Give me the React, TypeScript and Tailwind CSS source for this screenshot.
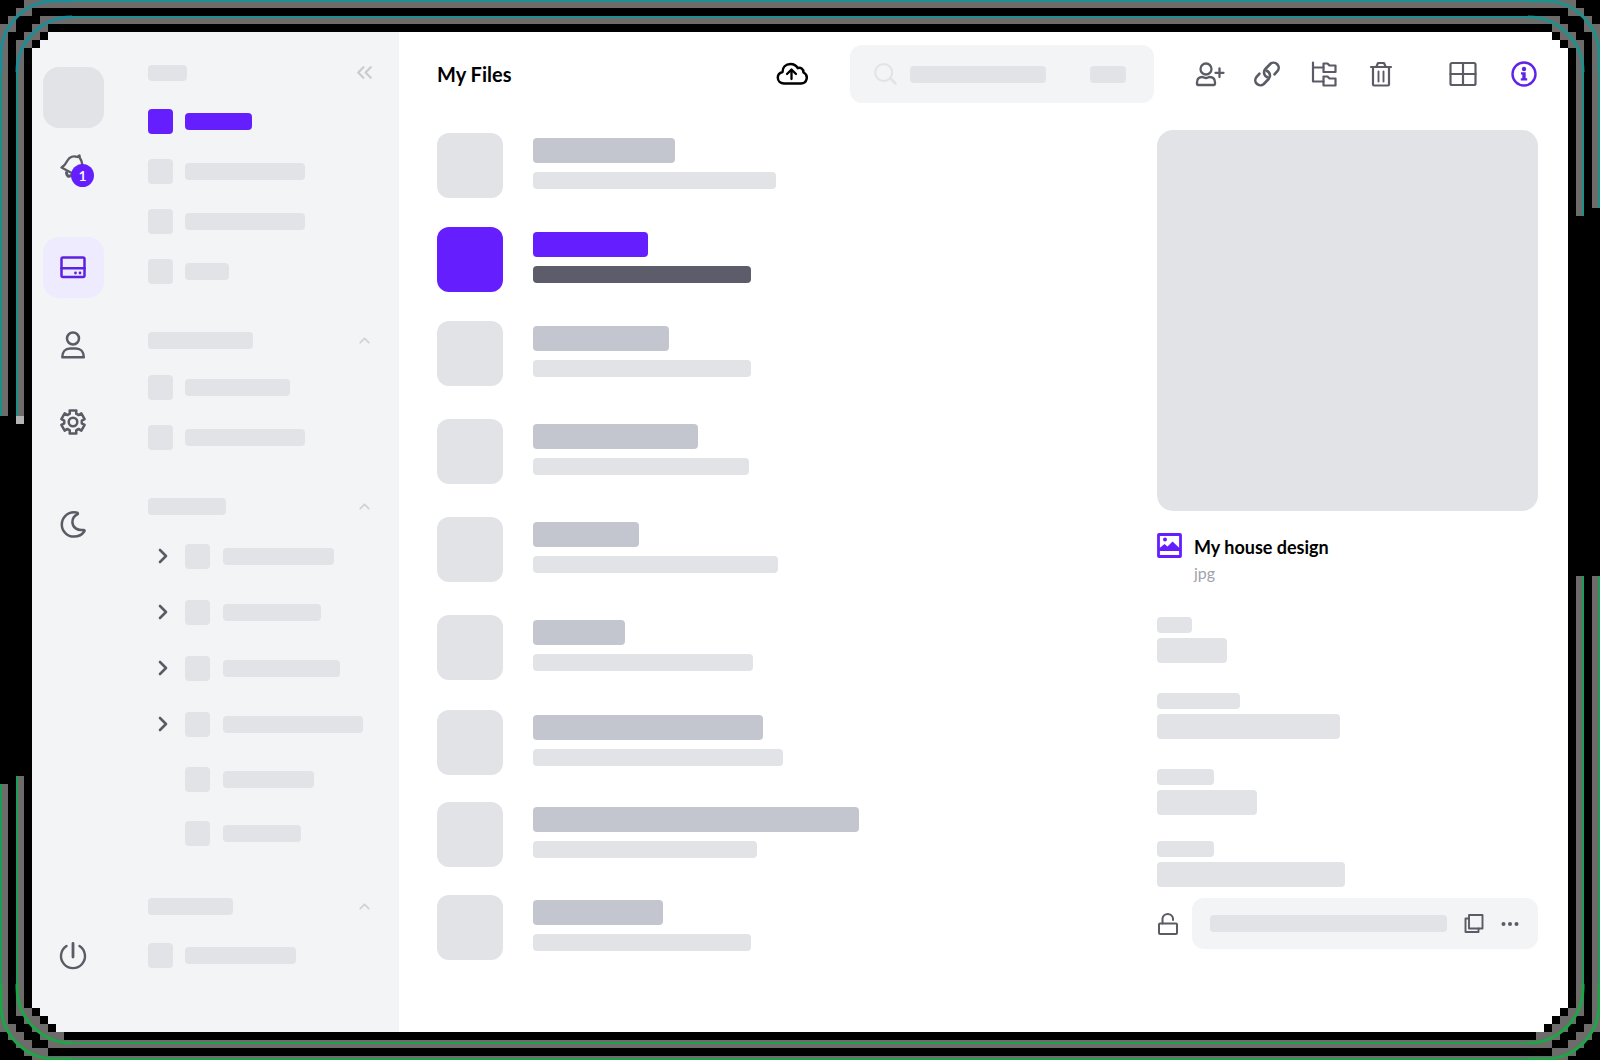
import React from "react";
import { ChevronRight, ChevronUp, ChevronsLeft } from "lucide-react";

/* ---------- decorative frame ---------- */

const TOP_CORNER = [
  "000111111",
  "001100000",
  "010001111",
  "110011000",
  "100110   ",
  "10110    ",
  "1010     ",
  "1010     ",
  "1010     ",
];

const BOTTOM_CORNER = [
  "1010     ",
  "1010     ",
  "1010     ",
  "10110    ",
  "100110   ",
  "1100110  ",
  "011001110",
  "001100111",
  "000111000",
  "000011111",
];

function Corner({ side, right }: { side: "top" | "bottom"; right?: boolean }) {
  const top = side === "top";
  const rows = top ? TOP_CORNER : BOTTOM_CORNER;
  const place = top
    ? right
      ? "top-0 right-0 -scale-x-100"
      : "top-0 left-0"
    : right
      ? "bottom-0 right-0 -scale-x-100"
      : "bottom-0 left-0";
  const h = top ? 72 : 76;
  const line = top ? (right ? "#1f908a" : "#1c8d98") : "#1da548";
  return (
    <svg
      aria-hidden="true"
      width="72"
      height={h}
      viewBox={`0 0 72 ${h}`}
      className={`pointer-events-none absolute ${place}`}
      shapeRendering="crispEdges"
    >
      {rows.map((row, y) =>
        row.split("").map((c, x) =>
          c === " " ? null : (
            <rect key={`${x}-${y}`} x={x * 8} y={y * 8} width="8" height="8" fill={c === "1" ? "#6e6c6b" : "#000"} />
          ),
        ),
      )}
      <g fill="none" stroke={line} strokeWidth="3" shapeRendering="auto">
        {top ? (
          <>
            <path d="M1 72V55A54 54 0 0 1 55 1H72" />
            <path d="M17 72A55 55 0 0 1 72 17" />
          </>
        ) : (
          <>
            <path d="M1 0V21A54 54 0 0 0 55 75H72" />
            <path d="M17 0V4A55 55 0 0 0 72 59" />
          </>
        )}
      </g>
    </svg>
  );
}

function Frame() {
  return (
    <div aria-hidden="true" className="pointer-events-none absolute inset-0 overflow-hidden">
      <div className="absolute inset-x-[72px] top-0 h-2 border-t-2 border-[#1f8f90] bg-[#6e6c6b]" />
      <div className="absolute inset-x-[72px] top-4 h-2 border-t-2 border-[#1f8f90] bg-[#6e6c6b]" />
      <div className="absolute inset-x-[72px] bottom-3 h-2 bg-[#6e6c6b]" />
      <div className="absolute inset-x-[72px] bottom-4 h-[2px] bg-[#1fa04c]" />
      <div className="absolute inset-x-[72px] bottom-0 h-1 border-b-2 border-[#1fa04c] bg-[#6e6c6b]" />

      <div className="absolute top-[72px] left-0 h-[344px] w-2 border-l-2 border-[#1b8f86] bg-[#6e6c6b]" />
      <div className="absolute top-[72px] left-4 h-[344px] w-2 border-l-2 border-[#1b8f86] bg-[#6e6c6b]" />
      <div className="absolute top-[416px] left-4 size-2 bg-[#b4b4b4]" />
      <div className="absolute bottom-[76px] left-0 h-[200px] w-2 border-l-2 border-[#1c9c56] bg-[#6e6c6b]" />
      <div className="absolute bottom-[76px] left-4 h-[208px] w-2 border-l-2 border-[#1c9c56] bg-[#6e6c6b]" />

      <div className="absolute top-[72px] right-0 h-[136px] w-2 border-r-2 border-[#1f9088] bg-[#6e6c6b]" />
      <div className="absolute top-[72px] right-4 h-[144px] w-2 border-r-2 border-[#1f9088] bg-[#6e6c6b]" />
      <div className="absolute right-0 bottom-[76px] h-[408px] w-2 border-r-2 border-[#1f9c58] bg-[#6e6c6b]" />
      <div className="absolute right-4 bottom-[76px] h-[408px] w-2 border-r-2 border-[#1f9c58] bg-[#6e6c6b]" />

      <Corner side="top" />
      <Corner side="top" right />
      <Corner side="bottom" />
      <Corner side="bottom" right />
    </div>
  );
}

/* ---------- icons ---------- */

function Icon({
  w = 28,
  h = 28,
  sw = 2.3,
  children,
}: {
  w?: number;
  h?: number;
  sw?: number;
  children: React.ReactNode;
}) {
  return (
    <svg
      aria-hidden="true"
      width={w}
      height={h}
      viewBox={`0 0 ${w} ${h}`}
      fill="none"
      stroke="currentColor"
      strokeWidth={sw}
      strokeLinecap="round"
      strokeLinejoin="round"
    >
      {children}
    </svg>
  );
}

const BellIcon = () => (
  <Icon>
    <path d="M2.500 13.500C6 11.500 7 9.500 8.500 6.500C10.500 3 14.500 1.500 18.500 3L20.500 1.500L20.800 4C23 6.500 23.500 9 23.200 14L22 24Z" />
    <path d="M7.500 18.500C7.500 22 9.500 23 12 21.500" strokeWidth="3" />
  </Icon>
);

const DriveIcon = () => (
  <Icon sw={2.5}>
    <rect x="2.500" y="3.500" width="23" height="19.500" rx="1.500" />
    <path d="M2.500 14.300H25.500" />
    <circle cx="16.500" cy="19" r="1.400" fill="currentColor" stroke="none" />
    <circle cx="21" cy="19" r="1.400" fill="currentColor" stroke="none" />
  </Icon>
);

const UserIcon = () => (
  <Icon sw={2.5}>
    <circle cx="14" cy="7.500" r="6" />
    <path d="M3.300 26.300C3.300 20.800 6.500 17.600 11 17.600H17C21.500 17.600 24.800 20.800 24.800 26.300Z" />
  </Icon>
);

const GEAR = Array.from({ length: 6 })
  .flatMap((_, i) =>
    [
      [-21, 8.9],
      [-16, 12],
      [16, 12],
      [21, 8.9],
    ].map(([deg, r]) => {
      const a = ((i * 60 + deg - 90) * Math.PI) / 180;
      return `${(14 + r * Math.cos(a)).toFixed(2)} ${(14 + r * Math.sin(a)).toFixed(2)}`;
    }),
  )
  .join("L");

const GearIcon = () => (
  <Icon sw={2.5}>
    <path d={`M${GEAR}Z`} />
    <circle cx="14" cy="14" r="4.300" />
  </Icon>
);

const MoonIcon = () => (
  <Icon sw={2.5}>
    <path d="M18.300 2.700C17.300 2.300 16 2.200 15 2.200A12.200 12.200 0 0 0 15 26.600C19.500 26.600 23.300 24.500 25.400 21.300C25.900 20.500 25.300 19.800 24.500 19.900C18.500 20.900 13.400 17.500 13.400 12C13.400 8.800 15.200 6 18.300 4.400C19.200 3.900 19 3 18.300 2.700Z" />
  </Icon>
);

const PowerIcon = () => (
  <Icon sw={2.4}>
    <path d="M14 1.500V15" strokeWidth="2.800" />
    <path d="M7.500 4A12 12 0 1 0 20.500 4" />
  </Icon>
);

const CloudIcon = () => (
  <Icon w={32} h={24} sw={2.5}>
    <path d="M8 21.500H25A5.800 5.800 0 0 0 27.500 10.500C27.500 7 24.500 5 21.800 6.200C20 3 17.500 2 14.500 2C9.500 2 6.500 5.500 6.500 10C3.500 10.800 1.800 13 1.800 15.600C1.800 19 4.500 21.500 8 21.500Z" />
    <path d="M15.500 17V8M11 12L15.500 7.500L20 12" strokeWidth="2.300" />
  </Icon>
);

const SearchIcon = () => (
  <Icon w={24} h={24} sw={2}>
    <circle cx="9.700" cy="10.500" r="8.500" />
    <path d="M17 17L21.500 21.500" strokeWidth="2.600" />
  </Icon>
);

const UserPlusIcon = () => (
  <Icon w={30} h={26}>
    <circle cx="11" cy="8" r="5.500" />
    <path d="M2 23V21.500C2 18 4 16 7.500 16C8.500 16 9.500 17 11 17C12.500 17 13.500 16 14.500 16C18 16 20 18 20 21.500V23C20 23.500 19.700 24 19 24H3C2.300 24 2 23.500 2 23Z" />
    <path d="M24.500 7.500V16M20.500 11.800H28.500" />
  </Icon>
);

const LinkIcon = () => (
  <Icon w={28} h={28} sw={2.6}>
    <path d="M14.300 17.200C10.500 15.600 10.300 11.300 12.400 9L17.200 4A5.100 5.100 0 0 1 24.400 11.200L21.500 14.400" />
    <path d="M13.700 10.800C17.500 12.400 17.700 16.700 15.600 19L10.800 24A5.100 5.100 0 0 1 3.600 16.800L6.500 13.600" />
  </Icon>
);

const TreeIcon = () => (
  <Icon w={26} h={26} sw={2.2}>
    <path d="M2 1.500V20.500H12.500M2 6.500H12.500" />
    <path d="M12.500 2.500H16.500L18.500 4.500H24.500V11H12.500Z" />
    <path d="M12.500 15.500H16.500L18.500 17.500H24.500V24.500H12.500Z" />
  </Icon>
);

const TrashIcon = () => (
  <Icon w={24} h={26} sw={2.2}>
    <path d="M2 6H22M4 6V23.500C4 24 4.300 24.500 5 24.500H19C19.700 24.500 20 24 20 23.500V6" />
    <path d="M7.500 5.500L9 2H15L16.500 5.500" />
    <path d="M9.500 10.500V20.500M14.500 10.500V20.500" strokeWidth="1.900" />
  </Icon>
);

const GridIcon = () => (
  <Icon w={28} h={26} sw={2.2}>
    <rect x="1.500" y="2" width="25" height="22" rx="1.500" />
    <path d="M14 2V24M1.500 13H26.500" />
  </Icon>
);

const InfoIcon = () => (
  <Icon w={28} h={28} sw={2.4}>
    <circle cx="14" cy="14" r="11.500" />
    <circle cx="14" cy="9" r="2.200" fill="currentColor" stroke="none" />
    <path d="M11 12.300H15.700V18.300H17.200V20.500H10.800V18.300H12.300V14.400H11Z" fill="currentColor" stroke="none" />
  </Icon>
);

const ImageIcon = () => (
  <Icon w={25} h={25} sw={2.8}>
    <rect x="1.500" y="1.500" width="22" height="22" rx="0.500" />
    <circle cx="8" cy="6.500" r="2" fill="currentColor" stroke="none" />
    <path d="M2 18V15.500L7.500 11L10.500 13.500L15.500 8.500L23 15.500V18Z" fill="currentColor" stroke="none" />
  </Icon>
);

const LockIcon = () => (
  <Icon w={22} h={26} sw={2}>
    <rect x="2" y="12.500" width="18" height="10.500" rx="1" />
    <path d="M5.500 12.500V7.500A5.300 5.300 0 0 1 16 7.500V9" />
  </Icon>
);

const CopyIcon = () => (
  <Icon w={22} h={22} sw={1.9}>
    <rect x="6" y="2" width="13.500" height="13.500" />
    <path d="M6 5.500H2.500V19H15.500V15.500" />
  </Icon>
);

const DotsIcon = () => (
  <Icon w={18} h={8}>
    <circle cx="2.500" cy="4" r="2" fill="currentColor" stroke="none" />
    <circle cx="9" cy="4" r="2" fill="currentColor" stroke="none" />
    <circle cx="15.500" cy="4" r="2" fill="currentColor" stroke="none" />
  </Icon>
);

/* ---------- pieces ---------- */

function IconButton({ label, className = "", children }: { label: string; className?: string; children: React.ReactNode }) {
  return (
    <button type="button" aria-label={label} className={`flex shrink-0 items-center justify-center ${className}`}>
      {children}
    </button>
  );
}

const Bar = ({ className }: { className: string }) => (
  <span className={`block shrink-0 rounded ${className}`} />
);

function NavRow({ bar, active, height = "h-[50px]" }: { bar: string; active?: boolean; height?: string }) {
  const color = active ? "bg-[#651fff]" : "bg-[#e2e3e6]";
  return (
    <li>
      <a href="#" aria-label="Folder" className={`flex items-center gap-3 ${height}`}>
        <Bar className={`size-[25px] ${color}`} />
        <Bar className={`h-[17px] ${bar} ${color}`} />
      </a>
    </li>
  );
}

function TreeRow({ bar, leaf }: { bar: string; leaf?: boolean }) {
  return (
    <li className={`flex items-center ${leaf ? "h-[54px]" : "h-14"}`}>
      <div className="flex w-[37px] shrink-0">
        {!leaf && (
          <IconButton label="Expand folder" className="ml-[3px] h-6 w-6">
            <ChevronRight size={24} strokeWidth={2.6} className="shrink-0" />
          </IconButton>
        )}
      </div>
      <a href="#" aria-label="Folder" className="flex items-center gap-[13px]">
        <Bar className="size-[25px] bg-[#e2e3e6]" />
        <Bar className={`h-[17px] bg-[#e2e3e6] ${bar}`} />
      </a>
    </li>
  );
}

function SectionHeader({ bar, className }: { bar: string; className: string }) {
  return (
    <div className={`flex h-11 items-center justify-between ${className}`}>
      <Bar className={`h-[17px] bg-[#e2e3e6] ${bar}`} />
      <IconButton label="Collapse section" className="size-[18px] text-[#d2d3d6]">
        <ChevronUp size={17} strokeWidth={2.6} />
      </IconButton>
    </div>
  );
}

const FILES = [
  { name: "w-[142px]", meta: "w-[243px]", space: "mb-[29px]" },
  { name: "w-[115px]", meta: "w-[218px]", space: "mb-[29px]", active: true },
  { name: "w-[136px]", meta: "w-[218px]", space: "mb-[33px]" },
  { name: "w-[165px]", meta: "w-[216px]", space: "mb-[33px]" },
  { name: "w-[106px]", meta: "w-[245px]", space: "mb-[33px]" },
  { name: "w-[92px]", meta: "w-[220px]", space: "mb-[30px]" },
  { name: "w-[230px]", meta: "w-[250px]", space: "mb-[27px]" },
  { name: "w-[326px]", meta: "w-[224px]", space: "mb-[28px]" },
  { name: "w-[130px]", meta: "w-[218px]", space: "" },
];

const PROPERTIES = [
  { label: "w-[35px]", value: "w-[70px]", space: "mb-[30px]" },
  { label: "w-[83px]", value: "w-[183px]", space: "mb-[30px]" },
  { label: "w-[57px]", value: "w-[100px]", space: "mb-[26px]" },
  { label: "w-[57px]", value: "w-[188px]", space: "" },
];

export default function App() {
  return (
    <div className="relative flex min-h-screen bg-black px-8 pt-8 pb-7 font-['Lato',sans-serif]">
      <div className="flex min-w-0 flex-1 bg-white text-[#5b5b66]">
        {/* icon rail */}
        <nav aria-label="Apps" className="flex w-[82px] shrink-0 flex-col items-center bg-[#f3f4f6] pt-[35px] pb-[62px]">
          <div className="size-[61px] rounded-2xl bg-[#e2e3e6]" />
          <button type="button" aria-label="Notifications" className="relative mt-[26px]">
            <BellIcon />
            <span className="absolute top-[10px] left-3 flex size-[23px] items-center justify-center rounded-full bg-[#651fff] text-sm font-semibold text-white">
              1
            </span>
          </button>
          <IconButton label="Drive" className="mt-[55px] size-[61px] rounded-2xl bg-[#eeebff] text-[#5d22e0]">
            <DriveIcon />
          </IconButton>
          <IconButton label="Contacts" className="mt-[33px] size-7">
            <UserIcon />
          </IconButton>
          <IconButton label="Settings" className="mt-[49px] size-7">
            <GearIcon />
          </IconButton>
          <IconButton label="Dark mode" className="mt-[74px] size-7">
            <MoonIcon />
          </IconButton>
          <IconButton label="Sign out" className="mt-auto size-7">
            <PowerIcon />
          </IconButton>
        </nav>

        {/* folder sidebar */}
        <aside className="w-[285px] shrink-0 bg-[#f3f4f6] pt-[17px] pr-[26px] pl-[34px]">
          <div className="flex h-[47px] items-center justify-between">
            <Bar className="h-4 w-[39px] bg-[#e2e3e6]" />
            <IconButton label="Collapse sidebar" className="size-[18px] text-[#cbccd0]">
              <ChevronsLeft size={25} strokeWidth={2.2} className="shrink-0" />
            </IconButton>
          </div>
          <ul>
            <NavRow bar="w-[67px]" active />
            <NavRow bar="w-[120px]" />
            <NavRow bar="w-[120px]" />
            <NavRow bar="w-[44px]" />
          </ul>
          <SectionHeader bar="w-[105px]" className="mt-[22px]" />
          <ul>
            <NavRow bar="w-[105px]" />
            <NavRow bar="w-[120px]" />
          </ul>
          <SectionHeader bar="w-[78px]" className="mt-[22px]" />
          <ul>
            <TreeRow bar="w-[111px]" />
            <TreeRow bar="w-[98px]" />
            <TreeRow bar="w-[117px]" />
            <TreeRow bar="w-[140px]" />
            <TreeRow bar="w-[91px]" leaf />
            <TreeRow bar="w-[78px]" leaf />
          </ul>
          <SectionHeader bar="w-[85px]" className="mt-6" />
          <ul>
            <NavRow bar="w-[111px]" height="h-[54px]" />
          </ul>
        </aside>

        <main className="flex min-w-0 flex-1 flex-col pt-[13px] pr-[30px] pl-[38px]">
          <header className="flex h-[58px] items-center">
            <h1 className="text-[20px] leading-7 font-bold text-black">My Files</h1>
            <IconButton label="Upload" className="mr-[42px] ml-auto text-black">
              <CloudIcon />
            </IconButton>
            <label className="relative flex h-full w-[304px] items-center rounded-xl bg-[#f3f4f6] pr-7 pl-6">
              <span className="text-[#e2e3e6]">
                <SearchIcon />
              </span>
              <Bar className="ml-3 h-[17px] w-[136px] bg-[#e2e3e6]" />
              <Bar className="ml-auto h-[17px] w-9 bg-[#e2e3e6]" />
              <input type="search" aria-label="Search files" className="absolute inset-0 rounded-xl bg-transparent pr-20 pl-14 outline-none" />
            </label>
            <div className="ml-[42px] flex items-center gap-[29px]">
              <IconButton label="Share with people" className="w-7">
                <span className="shrink-0">
                  <UserPlusIcon />
                </span>
              </IconButton>
              <IconButton label="Copy link" className="w-7">
                <LinkIcon />
              </IconButton>
              <IconButton label="Move to folder" className="w-7">
                <TreeIcon />
              </IconButton>
              <IconButton label="Delete" className="w-7">
                <TrashIcon />
              </IconButton>
            </div>
            <div className="ml-[54px] flex items-center gap-[33px]">
              <IconButton label="Grid view">
                <GridIcon />
              </IconButton>
              <IconButton label="Details" className="text-[#5f24e6]">
                <InfoIcon />
              </IconButton>
            </div>
          </header>

          <div className="mt-[27px] flex">
            <ul className="min-w-0 flex-1 pt-[3px]">
              {FILES.map((f, i) => (
                <li key={i} className={f.space}>
                  <button type="button" aria-label="File" className="flex h-[65px] w-full items-start gap-[30px]">
                    <Bar className={`h-[65px] w-[66px] rounded-xl ${f.active ? "bg-[#651fff]" : "bg-[#e2e3e6]"}`} />
                    <span className="flex flex-col gap-[9px] pt-[5px]">
                      <Bar className={`h-[25px] ${f.name} ${f.active ? "bg-[#651fff]" : "bg-[#c3c6ce]"}`} />
                      <Bar className={`h-[17px] ${f.meta} ${f.active ? "bg-[#5c5c6b]" : "bg-[#e2e3e6]"}`} />
                    </span>
                  </button>
                </li>
              ))}
            </ul>

            <aside className="w-[381px] shrink-0">
              <div className="aspect-square w-full rounded-2xl bg-[#e2e3e6]" />
              <div className="mt-[22px] flex gap-3">
                <span className="text-[#651fff]">
                  <ImageIcon />
                </span>
                <div>
                  <h2 className="text-[18px] leading-7 font-bold text-black">My house design</h2>
                  <p className="text-base leading-6 text-[#a0a3ab]">jpg</p>
                </div>
              </div>
              <dl className="mt-8">
                {PROPERTIES.map((p, i) => (
                  <div key={i} className={`flex flex-col gap-[5px] ${p.space}`}>
                    <dt className={`h-4 rounded bg-[#e2e3e6] ${p.label}`} />
                    <dd className={`h-[25px] rounded bg-[#e2e3e6] ${p.value}`} />
                  </div>
                ))}
              </dl>
              <div className="mt-[11px] flex items-center gap-[13px]">
                <IconButton label="Unlock link">
                  <LockIcon />
                </IconButton>
                <div className="flex h-[51px] flex-1 items-center rounded-xl bg-[#f3f4f6] pr-[19px] pl-[18px]">
                  <span className="mr-4 h-[17px] flex-1 rounded bg-[#e2e3e6]" />
                  <IconButton label="Copy">
                    <CopyIcon />
                  </IconButton>
                  <IconButton label="More options" className="ml-4">
                    <DotsIcon />
                  </IconButton>
                </div>
              </div>
            </aside>
          </div>
        </main>
      </div>
      <Frame />
    </div>
  );
}
